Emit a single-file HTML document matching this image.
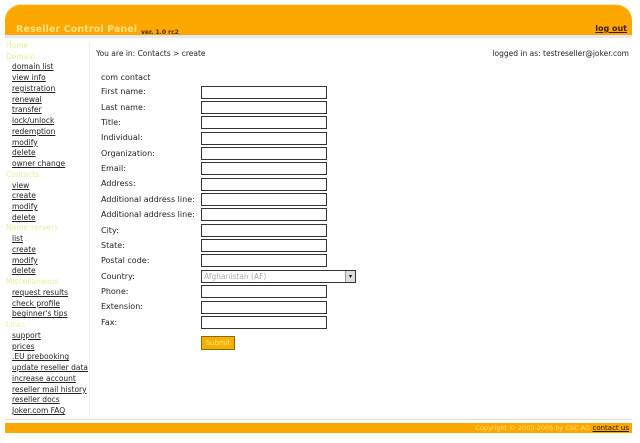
<!DOCTYPE html>
<html><head><style>
body{margin:0;width:640px;height:443px;background:#fff;font-family:"DejaVu Sans","Liberation Sans",sans-serif;position:relative;overflow:hidden;color:#222}
.hdr{position:absolute;left:5px;top:4px;width:627px;height:30px;background:#fca800;border-radius:16px 16px 0 0;border-top:1px solid #fde9a0}
.hdr .t{position:absolute;left:11px;top:19px;font-size:9.5px;color:#fde27a;font-weight:bold;letter-spacing:.1px}
.hdr .v{position:absolute;left:136px;top:24px;font-size:6px;color:#4a2a00;font-weight:bold}
.hdr .lo{position:absolute;right:5px;top:19px;font-size:8px;color:#3a1a00;text-decoration:underline;font-weight:bold}
.shadow{position:absolute;left:5px;top:35px;width:627px;height:3px;background:#e8e6f0}
.side{position:absolute;left:6px;top:41px;font-size:7.5px;line-height:10.74px}
.side div{height:10.74px;white-space:nowrap}
.side .h{color:#e4eea0}
.side a{color:#222;text-decoration:underline;margin-left:6px}
.vl{position:absolute;left:89px;top:42px;width:1px;height:374px;background:#eee}
.crumb{position:absolute;left:96px;top:49px;font-size:7.5px}
.log{position:absolute;right:11px;top:49px;font-size:7.5px}
.lab{position:absolute;left:101px;font-size:8px}
.inp{position:absolute;left:201px;width:124px;height:11px;border:1px solid #333;background:#fff}
.sel{position:absolute;left:201px;width:151px;height:11px;border:1px solid #333;background:#fff;font-size:7.5px;color:#aaa;line-height:11px;padding-left:2px;box-sizing:content-box}
.btn{position:absolute;left:201px;top:336px;width:32px;height:12px;background:#f4b000;border:1px solid #8a6a00;font-size:7px;color:#fde27a;text-align:center;line-height:12px}
.fl{position:absolute;left:5px;top:419px;width:627px;height:1px;background:#f0d8c8}
.ft{position:absolute;left:5px;top:423px;width:627px;height:10px;background:#fca800}
.ft span{position:absolute;right:42px;top:1px;font-size:6.5px;color:#fde27a}
.ft a{position:absolute;right:3px;top:1px;font-size:7px;color:#2a1a00;text-decoration:underline}
</style></head><body>
<div class="hdr"><span class="t">Reseller Control Panel</span><span class="v">ver. 1.0 rc2</span><span class="lo">log out</span></div>
<div class="shadow"></div>
<div class="side">
<div class="h">Home</div><div class="h">Domain</div>
<div><a>domain list</a></div><div><a>view info</a></div><div><a>registration</a></div><div><a>renewal</a></div><div><a>transfer</a></div><div><a>lock/unlock</a></div><div><a>redemption</a></div><div><a>modify</a></div><div><a>delete</a></div><div><a>owner change</a></div>
<div class="h">Contacts</div>
<div><a>view</a></div><div><a>create</a></div><div><a>modify</a></div><div><a>delete</a></div>
<div class="h">Name servers</div>
<div><a>list</a></div><div><a>create</a></div><div><a>modify</a></div><div><a>delete</a></div>
<div class="h">Miscellaneous</div>
<div><a>request results</a></div><div><a>check profile</a></div><div><a>beginner's tips</a></div>
<div class="h">Links</div>
<div><a>support</a></div><div><a>prices</a></div><div><a>.EU prebooking</a></div><div><a>update reseller data</a></div><div><a>increase account</a></div><div><a>reseller mail history</a></div><div><a>reseller docs</a></div><div><a>Joker.com FAQ</a></div>
</div>
<div class="vl"></div>
<div class="crumb">You are in: Contacts &gt; create</div>
<div class="log">logged in as: testreseller@joker.com</div>
<div class="lab" style="top:73px">com contact</div>
<div class="lab" style="top:87px">First name:</div><div class="inp" style="top:86px"></div>
<div class="lab" style="top:103px">Last name:</div><div class="inp" style="top:101px"></div>
<div class="lab" style="top:118px">Title:</div><div class="inp" style="top:116px"></div>
<div class="lab" style="top:133px">Individual:</div><div class="inp" style="top:132px"></div>
<div class="lab" style="top:149px">Organization:</div><div class="inp" style="top:147px"></div>
<div class="lab" style="top:164px">Email:</div><div class="inp" style="top:162px"></div>
<div class="lab" style="top:179px">Address:</div><div class="inp" style="top:178px"></div>
<div class="lab" style="top:195px">Additional address line:</div><div class="inp" style="top:193px"></div>
<div class="lab" style="top:210px">Additional address line:</div><div class="inp" style="top:208px"></div>
<div class="lab" style="top:226px">City:</div><div class="inp" style="top:224px"></div>
<div class="lab" style="top:241px">State:</div><div class="inp" style="top:239px"></div>
<div class="lab" style="top:256px">Postal code:</div><div class="inp" style="top:254px"></div>
<div class="lab" style="top:272px">Country:</div><div class="sel" style="top:270px">Afghanistan (AF)<span style="position:absolute;right:0;top:0;width:9px;height:11px;background:#ddd;border-left:1px solid #999;color:#000;font-size:6px;text-align:center">▾</span></div>
<div class="lab" style="top:287px">Phone:</div><div class="inp" style="top:285px"></div>
<div class="lab" style="top:302px">Extension:</div><div class="inp" style="top:301px"></div>
<div class="lab" style="top:318px">Fax:</div><div class="inp" style="top:316px"></div>
<div class="btn">Submit</div>
<div class="fl"></div>
<div class="ft"><span>Copyright © 2003-2005 by CSC AG</span><a>contact us</a></div>
</body></html>
